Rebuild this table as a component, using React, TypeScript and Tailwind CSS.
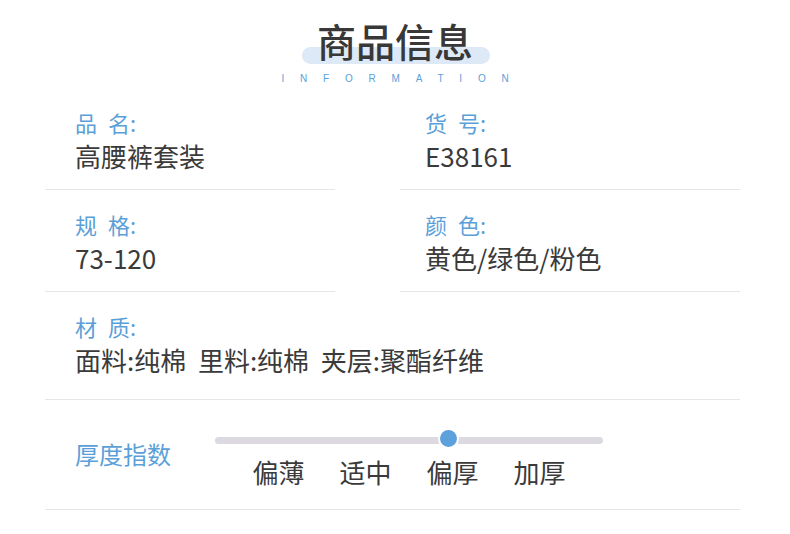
import React from 'react';

const cjk = { fontFamily: '"Noto Sans CJK SC", "Noto Sans", sans-serif' };

const Label: React.FC<{ a: string; b: string }> = ({ a, b }) => (
  <div className="text-[22px] leading-[33px] text-[#5b9fd9]">
    {a}
    <span className="inline-block w-[11px]" />
    {b}:
  </div>
);

const Cell: React.FC<{ a: string; b: string; value: string; pad: string }> = ({ a, b, value, pad }) => (
  <div className={`border-b border-[#e6e6e6] pt-[18px] pb-[17px] ${pad}`}>
    <Label a={a} b={b} />
    <div className="text-[26px] leading-[33px] text-[#3a3a3a] whitespace-pre">{value}</div>
  </div>
);

const options = ['偏薄', '适中', '偏厚', '加厚'];

export default function App() {
  return (
    <div className="w-[790px] h-[534px] bg-white overflow-hidden" style={cjk}>
      {/* header */}
      <div className="h-[88px] flex flex-col items-center">
        <div className="relative mt-[16px]">
          <div className="absolute left-[-15px] right-[-17px] top-[31px] h-[17px] rounded-full bg-[#dde9f6]" />
          <div className="relative text-[39px] leading-[48px] font-medium text-[#383838]">商品信息</div>
        </div>
        <div
          className="mt-[9px] pl-[16px] text-[10px] leading-[12px] tracking-[15.8px] text-[#5b9fd9]"
          style={{ fontFamily: '"Liberation Sans", sans-serif' }}
        >
          INFORMATION
        </div>
      </div>

      <div className="px-[45px] pr-[50px]">
        <div className="grid grid-cols-[290px_340px] gap-x-[65px]">
          <Cell a="品" b="名" value="高腰裤套装" pad="pl-[30px]" />
          <Cell a="货" b="号" value="E38161" pad="pl-[25px]" />
          <Cell a="规" b="格" value="73-120" pad="pl-[30px]" />
          <Cell a="颜" b="色" value="黄色/绿色/粉色" pad="pl-[25px]" />
        </div>

        <div className="border-b border-[#e6e6e6] pt-[18px] pb-[23px] pl-[30px]">
          <Label a="材" b="质" />
          <div className="text-[26px] leading-[33px] text-[#3a3a3a] whitespace-pre">
            面料:纯棉  里料:纯棉  夹层:聚酯纤维
          </div>
        </div>

        <div className="border-b border-[#e6e6e6] flex items-start pl-[30px] pb-[20px]">
          <div className="mt-[38px] w-[140px] text-[24px] leading-[32px] text-[#5b9fd9]">厚度指数</div>
          <div className="pt-[37px] w-[388px] flex flex-col items-center">
            <div className="relative w-full h-[7px] rounded-full bg-[#dcdae0]">
              <div className="absolute left-[223px] top-[-9.5px] w-[21px] h-[21px] rounded-full border-2 border-white bg-[#5ca0dc]" />
            </div>
            <div className="mt-[11px] flex gap-[35px] text-[26px] leading-[34px] text-[#3a3a3a]">
              {options.map((o) => (
                <span key={o}>{o}</span>
              ))}
            </div>
          </div>
        </div>
      </div>
    </div>
  );
}
